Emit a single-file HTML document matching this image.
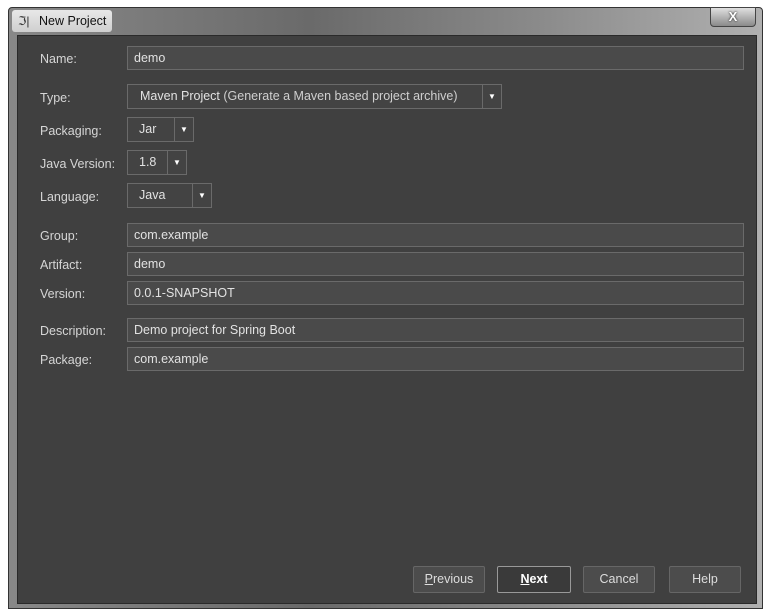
<!DOCTYPE html>
<html><head><style>
*{margin:0;padding:0;box-sizing:border-box}
body{width:769px;height:612px;background:#fff;position:relative;overflow:hidden;font-family:"Liberation Sans",sans-serif;font-size:12.5px}
.frame{position:absolute;left:8px;top:7px;width:755px;height:602px;background:linear-gradient(90deg,#888,#6a6a6a 40%,#8a8a8a 70%,#b0b0b0);border:1px solid #333;border-radius:4px 4px 0 0}
.title{position:absolute;left:12px;top:10px;width:100px;height:22px;background:linear-gradient(#e8e8e8,#cfcfcf);border-radius:3px}
.title span{position:absolute;left:27px;top:4px;color:#111;font-size:12.5px}
.title i{position:absolute;left:6px;top:4px;font-style:normal;font-size:12px;color:#333}
.close{position:absolute;left:710px;top:7px;width:46px;height:20px;background:linear-gradient(#e0e0e0,#8a8a8a);border:1px solid #444;border-radius:0 0 4px 4px;color:#fff;text-align:center;font-weight:bold;font-size:13px;line-height:18px;text-shadow:0 0 2px #000}
.content{position:absolute;left:17px;top:35px;width:740px;height:569px;background:#404040;border:1px solid #2a2a2a}
.lbl{position:absolute;left:40px;color:#d6d6d6;margin-top:2px}
.f{position:absolute;left:127px;height:24px;background:#4a4a4a;border:1px solid #6a6a6a;color:#e2e2e2;padding-left:6px;line-height:22px}
.w{width:617px}
.dd{position:absolute;left:127px;height:25px;border:1px solid #6a6a6a;background:#434343;color:#e2e2e2;line-height:23px}
.dd .a{position:absolute;right:0;top:0;bottom:0;width:19px;border-left:1px solid #6a6a6a;font-size:8px;text-align:center;color:#fff}
.btn{position:absolute;top:566px;width:72px;height:27px;border:1px solid #666;background:#4c4c4c;color:#ddd;text-align:center;line-height:25px;border-radius:2px}
</style></head><body>
<div class="frame"></div>
<div class="title"><i>ℑ|</i><span>New Project</span></div>
<div class="close">X</div>
<div class="content"></div>
<div class="lbl" style="top:50px">Name:</div><div class="f w" style="top:46px">demo</div>
<div class="lbl" style="top:89px">Type:</div>
<div class="dd" style="top:84px;width:375px;padding-left:12px">Maven Project <span style="color:#cfcfcf">(Generate a Maven based project archive)</span><div class="a">▼</div></div>
<div class="lbl" style="top:122px">Packaging:</div>
<div class="dd" style="top:117px;width:67px;padding-left:11px">Jar<div class="a">▼</div></div>
<div class="lbl" style="top:155px">Java Version:</div>
<div class="dd" style="top:150px;width:60px;padding-left:11px">1.8<div class="a">▼</div></div>
<div class="lbl" style="top:188px">Language:</div>
<div class="dd" style="top:183px;width:85px;padding-left:11px">Java<div class="a">▼</div></div>
<div class="lbl" style="top:227px">Group:</div><div class="f w" style="top:223px">com.example</div>
<div class="lbl" style="top:256px">Artifact:</div><div class="f w" style="top:252px">demo</div>
<div class="lbl" style="top:285px">Version:</div><div class="f w" style="top:281px">0.0.1-SNAPSHOT</div>
<div class="lbl" style="top:322px">Description:</div><div class="f w" style="top:318px">Demo project for Spring Boot</div>
<div class="lbl" style="top:351px">Package:</div><div class="f w" style="top:347px">com.example</div>
<div class="btn" style="left:413px"><u>P</u>revious</div>
<div class="btn" style="left:497px;width:74px;background:#3a3a3a;border:1px solid #999;font-weight:bold;color:#fff"><u>N</u>ext</div>
<div class="btn" style="left:583px">Cancel</div>
<div class="btn" style="left:669px">Help</div>
</body></html>
